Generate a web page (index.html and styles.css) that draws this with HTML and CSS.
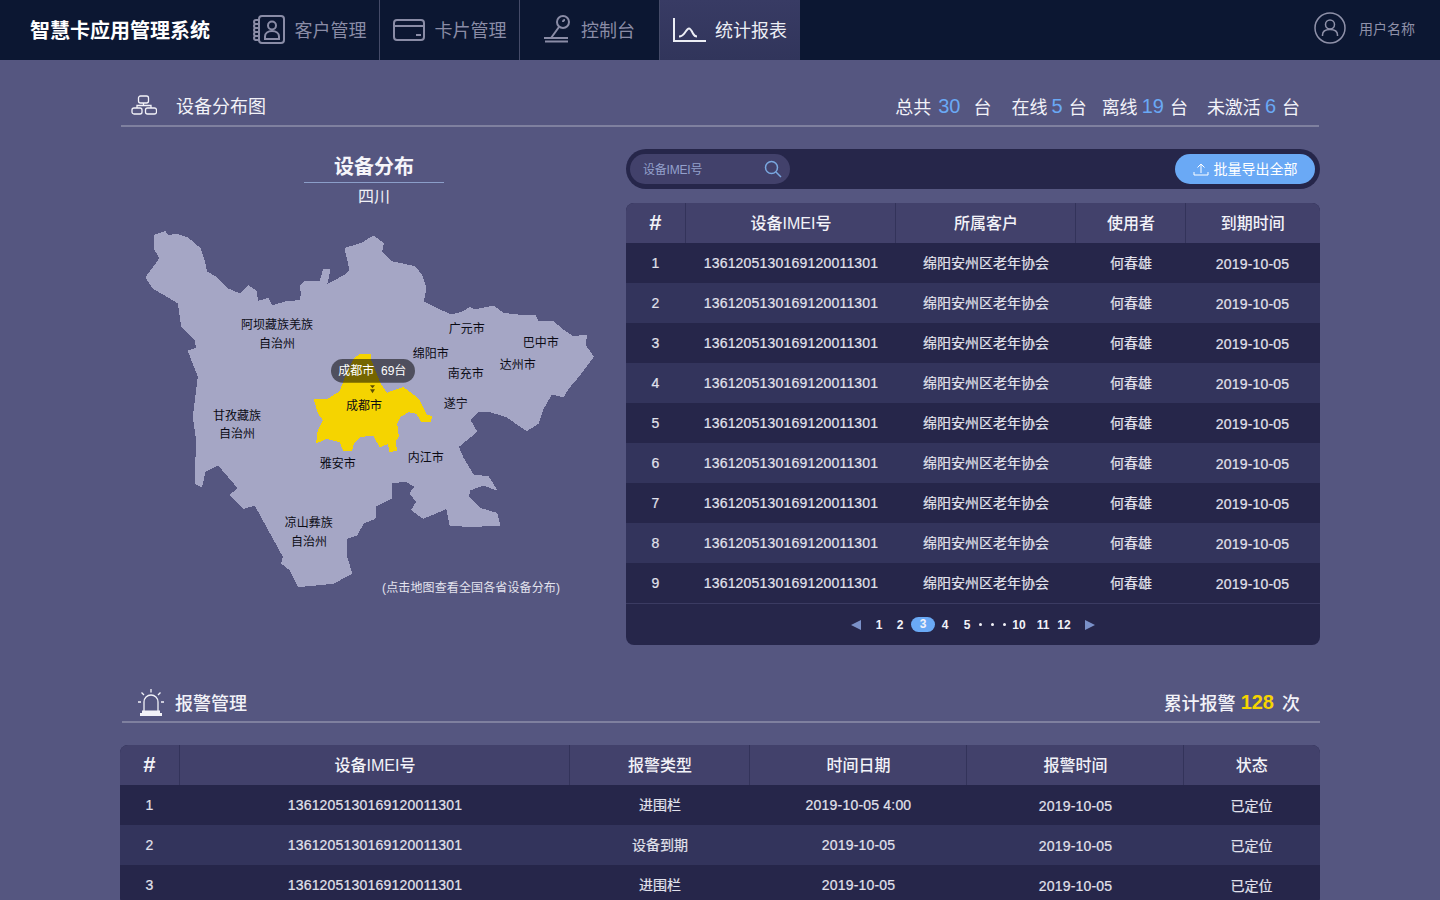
FILE: index.html
```html
<!DOCTYPE html>
<html lang="zh-CN">
<head>
<meta charset="utf-8">
<title>智慧卡应用管理系统</title>
<link rel="stylesheet" href="styles.css">
</head>
<body>
<header class="topbar">
  <div class="logo">智慧卡应用管理系统</div>
  <nav class="nav">
    <a class="nav-item">
      <svg class="nav-icon" width="32" height="32" viewBox="0 0 32 32"><rect x="6" y="2" width="25" height="27" rx="3"/><circle cx="19" cy="11.500" r="4"/><path d="M12 25v-2.500c0-3.500 3-5.500 7-5.500s7 2 7 5.500V25z"/><path d="M6 6H3a1.500 1.500 0 0 0 0 4h3M6 10H3a1.500 1.500 0 0 0 0 4h3M6 14H3a1.500 1.500 0 0 0 0 4h3M6 18H3a1.500 1.500 0 0 0 0 4h3M6 22H3a1.500 1.500 0 0 0 0 4h3"/></svg>
      <span>客户管理</span>
    </a>
    <a class="nav-item">
      <svg class="nav-icon" width="32" height="32" viewBox="0 0 32 32"><rect x="1" y="6" width="30" height="20" rx="3"/><path d="M1 12h30M23 21h5"/></svg>
      <span>卡片管理</span>
    </a>
    <a class="nav-item">
      <svg class="nav-icon" width="27" height="32" viewBox="0 0 27 32"><circle cx="19" cy="8" r="6"/><path d="M19 8a2 2 0 0 1 2-2M15 13 7 24M0 24h24M1 27.500h23"/></svg>
      <span>控制台</span>
    </a>
    <a class="nav-item nav-item-on">
      <svg class="nav-icon" width="32" height="32" viewBox="0 0 32 32"><path d="M1 4v23h32M6 22.500c3 0 4-1 6-4 2-3 3-4 4-4s2.500 2 4 5c1 2 2 3 4 3"/></svg>
      <span>统计报表</span>
    </a>
  </nav>
  <div class="user">
    <svg class="user-icon" width="32" height="32" viewBox="0 0 32 32"><circle cx="16" cy="16" r="15"/><circle cx="16" cy="12.500" r="4.500"/><path d="M8.500 24v-1c0-3.500 3-5.500 7.500-5.500s7.500 2 7.500 5.500v1"/></svg>
    <span>用户名称</span>
  </div>
</header>

<main class="page">
  <section class="sec-head sec-head-device">
    <svg class="sec-icon" width="26" height="20" viewBox="0 0 26 20"><rect x="7.500" y="1" width="10" height="7" rx="2"/><path d="M12.500 8v2.500M6 13v-2.500h14V13"/><rect x="1" y="13" width="10" height="6" rx="2"/><rect x="14.500" y="13" width="11" height="6" rx="2"/></svg>
    <h2 class="sec-title">设备分布图</h2>
    <div class="stats">
      <span class="stat"><span>总共</span><b class="num num-wide">30</b><span>台</span></span>
      <span class="stat stat-tight"><span>在线</span><b class="num">5</b><span>台</span></span>
      <span class="stat stat-near"><span>离线</span><b class="num">19</b><span>台</span></span>
      <span class="stat"><span>未激活</span><b class="num">6</b><span>台</span></span>
    </div>
  </section>

  <section class="device-row">
    <div class="map-col">
      <div class="map-title">设备分布</div>
      <div class="map-sub">四川</div>
      <svg class="map" width="480" height="380" viewBox="0 0 1440 1140">
        <path class="land" d="M75 45 105 35 115 47 140 42 175 55 210 85 222 120 230 155 255 170 290 205 330 222 355 197 380 215 382 245 415 235 425 258 470 245 510 242 515 220 510 200 525 183 570 185 580 150 600 148 590 195 645 165 660 150 645 85 695 70 730 48 760 70 755 95 785 125 855 140 875 165 888 205 880 245 930 270 965 285 1000 275 1020 262 1035 270 1090 258 1120 280 1165 285 1215 285 1225 305 1270 305 1300 330 1330 350 1370 345 1365 375 1390 410 1345 470 1315 505 1300 530 1265 522 1240 565 1225 610 1190 632 1165 615 1130 590 1080 575 1045 575 1020 600 1040 635 985 680 1000 715 1030 765 1075 770 1100 810 1060 795 1020 810 1015 830 1050 865 1100 880 1110 915 1020 920 960 915 950 865 880 895 845 870 860 845 840 820 855 800 830 785 785 787 785 835 735 860 735 895 700 910 680 945 650 955 650 1010 665 1060 610 1090 505 1100 480 1050 455 1030 460 1010 375 855 340 865 300 825 325 805 265 735 225 755 215 800 195 790 200 660 190 590 205 470 175 393 200 385 195 360 155 320 145 250 130 240 70 205 48 172 90 115 72 85Z"/>
        <path class="city" d="M645 475 670 420 690 402 720 402 722 420 750 490 770 520 820 503 850 525 870 545 890 585 905 590 900 605 875 605 860 580 835 575 810 590 800 610 805 650 795 665 800 690 780 695 775 670 750 680 730 645 690 650 670 670 665 690 640 690 630 665 590 655 560 668 565 630 580 600 565 580 553 537 590 540 630 515Z"/>
        <g class="labels">
          <text x="441" y="316">阿坝藏族羌族</text>
          <text x="441" y="371">自治州</text>
          <text x="1010" y="326">广元市</text>
          <text x="1232" y="368">巴中市</text>
          <text x="902" y="401">绵阳市</text>
          <text x="1007" y="461">南充市</text>
          <text x="1163" y="436">达州市</text>
          <text x="977" y="553">遂宁</text>
          <text x="702" y="559">成都市</text>
          <text x="321" y="587">甘孜藏族</text>
          <text x="321" y="641">自治州</text>
          <text x="623" y="733">雅安市</text>
          <text x="887" y="713">内江市</text>
          <text x="536" y="910">凉山彝族</text>
          <text x="537" y="965">自治州</text>
        </g>
        <rect class="tip" x="603" y="417" width="252" height="71" rx="35"/>
        <path class="tip-arrow" d="M720 496h15l-7.500 9zM720 508h15l-7.500 12z"/>
        <text class="tip-text" x="727" y="453">成都市  69台</text>
        <text class="map-note" x="756" y="1105">(点击地图查看全国各省设备分布)</text>
      </svg>
    </div>

    <div class="device-side">
      <div class="toolbar">
        <div class="search">
          <span class="search-text">设备IMEI号</span>
          <svg class="search-icon" width="18" height="18" viewBox="0 0 18 18"><circle cx="7.500" cy="7.500" r="6"/><path d="m12 12 5 5"/></svg>
        </div>
        <button class="export" type="button">
          <svg class="export-icon" width="16" height="13" viewBox="0 0 16 13"><path d="M8 10V1M4.500 4.500 8 1l3.500 3.500M1 9v3h14V9"/></svg>
          <span>批量导出全部</span>
        </button>
      </div>

      <div class="table-card">
        <table class="grid">
          <colgroup><col class="c-num"><col class="c-imei"><col class="c-cust"><col class="c-user"><col class="c-date"></colgroup>
          <thead><tr><th class="hash">#</th><th>设备IMEI号</th><th>所属客户</th><th>使用者</th><th>到期时间</th></tr></thead>
          <tbody>
            <tr><td>1</td><td>1361205130169120011301</td><td class="zh">绵阳安州区老年协会</td><td class="zh">何春雄</td><td class="date">2019-10-05</td></tr>
            <tr><td>2</td><td>1361205130169120011301</td><td class="zh">绵阳安州区老年协会</td><td class="zh">何春雄</td><td class="date">2019-10-05</td></tr>
            <tr><td>3</td><td>1361205130169120011301</td><td class="zh">绵阳安州区老年协会</td><td class="zh">何春雄</td><td class="date">2019-10-05</td></tr>
            <tr><td>4</td><td>1361205130169120011301</td><td class="zh">绵阳安州区老年协会</td><td class="zh">何春雄</td><td class="date">2019-10-05</td></tr>
            <tr><td>5</td><td>1361205130169120011301</td><td class="zh">绵阳安州区老年协会</td><td class="zh">何春雄</td><td class="date">2019-10-05</td></tr>
            <tr><td>6</td><td>1361205130169120011301</td><td class="zh">绵阳安州区老年协会</td><td class="zh">何春雄</td><td class="date">2019-10-05</td></tr>
            <tr><td>7</td><td>1361205130169120011301</td><td class="zh">绵阳安州区老年协会</td><td class="zh">何春雄</td><td class="date">2019-10-05</td></tr>
            <tr><td>8</td><td>1361205130169120011301</td><td class="zh">绵阳安州区老年协会</td><td class="zh">何春雄</td><td class="date">2019-10-05</td></tr>
            <tr><td>9</td><td>1361205130169120011301</td><td class="zh">绵阳安州区老年协会</td><td class="zh">何春雄</td><td class="date">2019-10-05</td></tr>
          </tbody>
        </table>
        <div class="pager">
          <i class="arrow arrow-left"></i>
          <span>1</span><span>2</span><span class="page-on">3</span><span>4</span><span>5</span>
          <i class="dot"></i><i class="dot"></i><i class="dot"></i>
          <span>10</span><span>11</span><span>12</span>
          <i class="arrow arrow-right"></i>
        </div>
      </div>
    </div>
  </section>

  <section class="sec-head sec-head-alarm">
    <svg class="sec-icon" width="26" height="27" viewBox="0 0 26 27"><path d="M6 22v-9a7 7 0 0 1 14 0v9"/><path class="solid" d="M4 21.500h18V24h2v3H2v-3h2z"/><path d="M13 0v3.500M3.500 3.500 6 6M22.500 3.500 20 6M0 13h3M23 13h3"/></svg>
    <h2 class="sec-title">报警管理</h2>
    <div class="total">
      <span>累计报警</span><b class="num-alarm">128</b><span>次</span>
    </div>
  </section>

  <div class="table-card table-alarm">
    <table class="grid">
      <colgroup><col class="a-num"><col class="a-imei"><col class="a-type"><col class="a-day"><col class="a-time"><col class="a-state"></colgroup>
      <thead><tr><th class="hash">#</th><th>设备IMEI号</th><th>报警类型</th><th>时间日期</th><th>报警时间</th><th>状态</th></tr></thead>
      <tbody>
        <tr><td>1</td><td>1361205130169120011301</td><td class="zh">进围栏</td><td class="date-up">2019-10-05 4:00</td><td class="date">2019-10-05</td><td class="zh-low">已定位</td></tr>
        <tr><td>2</td><td>1361205130169120011301</td><td class="zh">设备到期</td><td class="date-up">2019-10-05</td><td class="date">2019-10-05</td><td class="zh-low">已定位</td></tr>
        <tr><td>3</td><td>1361205130169120011301</td><td class="zh">进围栏</td><td class="date-up">2019-10-05</td><td class="date">2019-10-05</td><td class="zh-low">已定位</td></tr>
      </tbody>
    </table>
  </div>
</main>
</body>
</html>
```

FILE: styles.css
```css
* { box-sizing: border-box; }
html, body { margin: 0; height: 900px; overflow: hidden; }
body {
  background: #555680;
  color: #fff;
  font-family: "Liberation Sans", "Noto Sans CJK SC", sans-serif;
}

/* top bar */
.topbar { display: flex; align-items: stretch; height: 60px; background: #0c1732; }
.logo { width: 240px; padding-left: 30px; font-size: 20px; font-weight: 700; line-height: 62px; white-space: nowrap; }
.nav { display: flex; }
.nav-item {
  display: flex; align-items: center; justify-content: center; gap: 10px;
  width: 140px; border-right: 1px solid #454b68;
  color: #8a8ca6; font-size: 18px;
}
.nav-item span { padding-bottom: 3px; }
.nav-item:last-child { border-right: 0; }
.nav-item-on { color: #eceef5; background: linear-gradient(#383b64, #31355b); border-left: 1px solid #454b68; margin-left: -1px; width: 141px; }
.nav-icon { fill: none; stroke: currentColor; stroke-width: 2; overflow: visible; }
.user { display: flex; align-items: center; gap: 13px; margin-left: auto; padding: 0 25px 4px 0; color: #8f91a9; font-size: 14px; }
.user-icon { fill: none; stroke: currentColor; stroke-width: 1.500; }

/* layout */
.page { width: 1200px; margin: 0 auto; }
.sec-head { display: flex; align-items: center; border-bottom: 2px solid #7f809f; }
.sec-head-device { height: 41px; margin: 26px 1px 0; padding: 0 19px 1px 10px; }
.sec-head-alarm { height: 40px; margin: 38px 0 0 2px; padding: 0 20px 0 16px; }
.sec-icon { flex: none; fill: none; stroke: #f2f2f8; stroke-width: 1.300; }
.sec-icon .solid { fill: #f2f2f8; stroke: none; }
.sec-title { margin: 0 0 0 19px; font-size: 18px; font-weight: 400; color: #f2f2f8; }
.sec-head-alarm .sec-title { margin-left: 11px; font-weight: 500; }
.stats { display: flex; align-items: center; gap: 20px; margin-left: auto; padding-top: 2px; font-size: 18px; color: #f2f2f8; }
.stat { display: flex; align-items: center; gap: 4px; }
.stat-tight { margin-right: -5px; }
.stat-near { margin-right: -1px; }
.num { margin-right: 2px; font-size: 20px; font-weight: 400; color: #6aa9f5; }
.num-wide { margin: 0 9px 0 3px; }
.total { display: flex; align-items: center; gap: 5px; margin-left: auto; padding-left: 1px; font-size: 18px; font-weight: 500; color: #f2f2f8; }
.num-alarm { font-size: 20px; font-weight: 700; color: #f5d400; margin-right: 3px; }

.device-row { display: flex; margin-top: 22px; }

/* map */
.map-col { display: flex; flex-direction: column; align-items: center; width: 506px; padding-left: 2px; }
.map-title { width: 140px; height: 34px; border-bottom: 1px solid #8b9ec9; font-size: 20px; font-weight: 700; line-height: 37px; text-align: center; color: #f5f5fa; }
.map-sub { height: 26px; font-size: 16px; line-height: 28px; color: #f0f0f6; }
.map { display: block; align-self: flex-start; margin: 11px 0 0 8px; }
.land { fill: #a5a6c5; stroke: #a5a6c5; stroke-width: 3; stroke-linejoin: round; }
.city { fill: #f5d400; stroke: #f5d400; stroke-width: 3; stroke-linejoin: round; }
.land, .city { shape-rendering: crispEdges; }
.labels text { fill: #0b0b14; font-size: 36px; text-anchor: middle; dominant-baseline: central; }
.tip { fill: rgba(0, 0, 0, .52); }
.tip-arrow { fill: #5b4d05; }
.tip-text { fill: #fff; font-size: 36px; text-anchor: middle; dominant-baseline: central; white-space: pre; }
.map-note { fill: #e3e3ee; font-size: 36px; letter-spacing: .4px; dominant-baseline: central; }

/* right side */
.device-side { width: 694px; }
.toolbar {
  display: flex; align-items: center; justify-content: space-between;
  height: 40px; padding: 0 5px 0 4px; border-radius: 20px; background: #26264a;
}
.search {
  display: flex; align-items: center; justify-content: space-between;
  width: 160px; height: 30px; padding: 0 8px 0 13px; border-radius: 15px; background: #42416b;
}
.search-text { padding-bottom: 2px; font-size: 12px; letter-spacing: -.2px; color: #93a0cc; }
.search-icon { fill: none; stroke: #7aa8e0; stroke-width: 1.500; }
.export {
  display: flex; align-items: center; justify-content: center; gap: 5px;
  width: 140px; height: 30px; padding: 0; border: 0; border-radius: 15px;
  background: #6aa9f5; color: #fff; font: inherit; font-size: 14px;
}
.export span { padding-bottom: 2px; }
.export-icon { fill: none; stroke: #fff; stroke-width: 1; }

/* tables */
.table-card { margin-top: 14px; border-radius: 8px; overflow: hidden; background: #26264a; }
.table-alarm { margin-top: 22px; }
.grid { width: 100%; border-collapse: collapse; table-layout: fixed; }
.grid th {
  height: 40px; padding: 0 0 2px 2px; background: #42416b; border-right: 1px solid #33335a;
  color: #f2f2f8; font-size: 16px; font-weight: 500; text-align: center;
}
.grid th:last-child { padding-left: 0; border-right: 0; }
.grid th.hash { padding: 0; font-size: 22px; font-weight: 700; }
.grid td {
  height: 40px; padding: 0 0 0 2px; color: #e2e2ec; font-size: 14px; letter-spacing: .2px;
  text-align: center; white-space: nowrap; -webkit-text-stroke: .2px #e2e2ec;
}
.grid td:first-child { padding-left: 0; }
.grid td:last-child { padding-left: 0; }
.grid td.zh { padding-bottom: 2px; letter-spacing: 0; }
.grid td.zh-low { letter-spacing: 0; }
.grid td.date { padding-top: 2px; }
.grid td.date-up { padding-bottom: 1px; }
.grid tbody tr { background: #26264a; }
.grid tbody tr:nth-child(even) { background: #33345c; }

.c-num { width: 59px; } .c-imei { width: 210px; } .c-cust { width: 180px; } .c-user { width: 110px; } .c-date { width: 135px; }
.a-num { width: 59px; } .a-imei { width: 390px; } .a-type { width: 180px; } .a-day { width: 217px; } .a-time { width: 217px; } .a-state { width: 137px; }

/* pager */
.pager {
  display: grid; align-items: center; justify-items: center;
  grid-template-columns: 26px 20px 22px 24px 20px 24px 3px 20px 4px 26px 22px 20px 32px;
  height: 42px; padding-left: 217px; border-top: 1px solid #3b3b62;
  color: #f2f2f8; font-size: 12px; font-weight: 700;
}
.page-on { width: 24px; height: 15px; border-radius: 8px; background: #6aa9f5; text-align: center; line-height: 15px; }
.dot { width: 3px; height: 3px; border-radius: 50%; background: #f2f2f8; }
.arrow { width: 0; height: 0; border-top: 5px solid transparent; border-bottom: 5px solid transparent; }
.arrow-left { border-right: 10px solid #7a90c8; }
.arrow-right { border-left: 10px solid #7a90c8; }
```
